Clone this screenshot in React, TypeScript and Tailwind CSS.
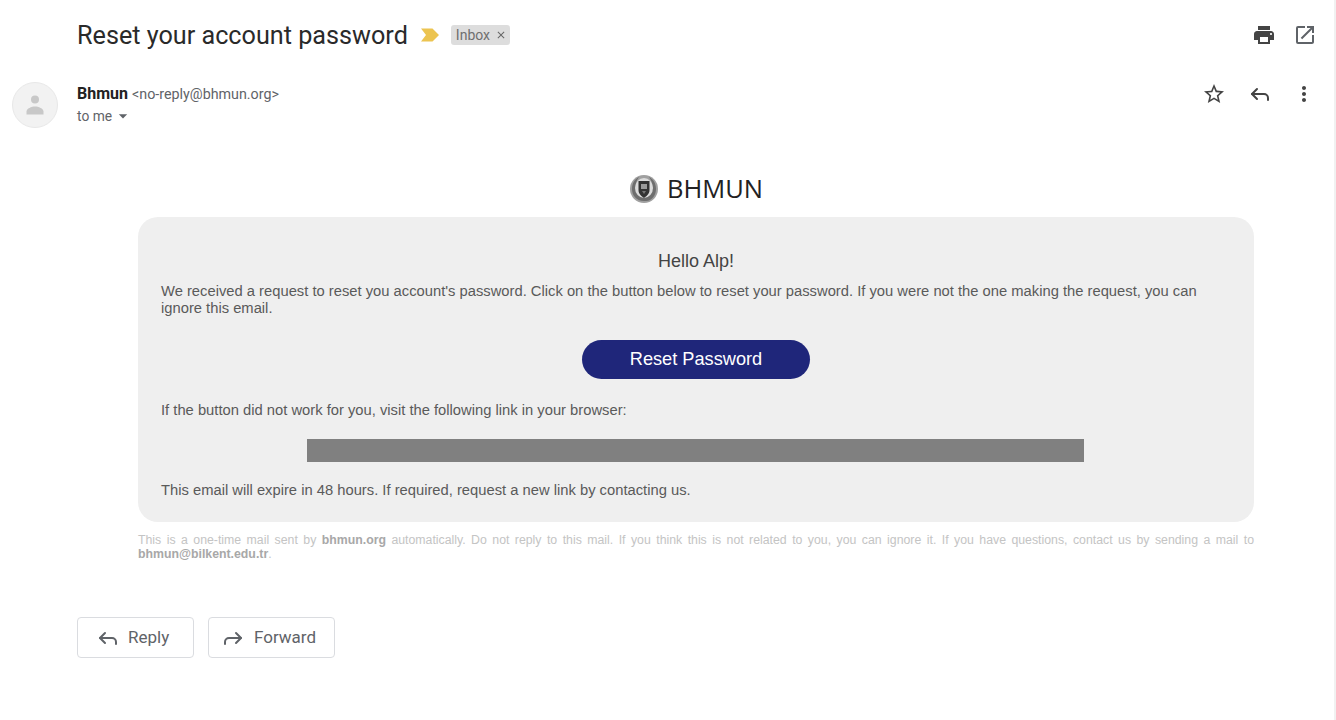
import React from "react";
import { MdPrint, MdOpenInNew, MdStarBorder, MdMoreVert, MdArrowDropDown, MdClose } from "react-icons/md";
import { Reply, Forward } from "lucide-react";

const arial = "font-['Liberation_Sans',Arial,sans-serif]";

const Logo = () => (
  <svg width="30" height="30" viewBox="0 0 30 30" className="shrink-0">
    <circle cx="15" cy="15" r="14" fill="#a0a0a0" />
    <path d="M15 27C7 27 3 21 3 15S6 5 10 3c-3 4-4 8-3 12s4 8 8 8 7-4 8-8-0-8-3-12c4 2 7 6 7 12s-4 12-10 12z" fill="#6e6e6e" />
    <ellipse cx="15" cy="14" rx="9" ry="10" fill="#dcdcdc" />
    <path d="M9.500 7h11v9c0 4-3 6-5.500 8-2.500-2-5.500-4-5.500-8z" fill="#333" />
    <path d="M12 10h6v5h-6z" fill="#9a9a9a" />
    <path d="M13 17h4l-2 3z" fill="#777" />
  </svg>
);

const App = () => {
  return (
    <div className="w-[1336px] h-[720px] bg-white overflow-hidden border-r-2 border-[#f1f1f1] font-['Roboto',sans-serif] text-[#222]">
      {/* subject */}
      <div className="flex items-center h-[70px] pl-[77px] pr-[17px]">
        <h1 className="pt-[2px] text-[25.200px] font-normal text-[#2a2a2a] leading-[68px]">Reset your account password</h1>
        <svg width="20" height="14" viewBox="0 0 20 14" className="ml-[12px]">
          <path d="M1 0.500h11.500l6.500 6.500-6.500 6.500H1l5-6.500z" fill="#ecc451" />
        </svg>
        <span className="ml-[11px] h-[20px] w-[59px] flex items-center gap-[5px] pl-[5px] rounded-[3px] bg-[#dddddd] text-[#6f6f6f] text-[14px] leading-none">
          Inbox
          <MdClose size={12} className="text-[#666]" />
        </span>
        <div className="ml-auto flex items-center gap-[17px]">
          <MdPrint size={24} className="text-[#444]" />
          <MdOpenInNew size={24} className="text-[#5f6368]" />
        </div>
      </div>

      {/* sender */}
      <div className="flex pl-[12px] pr-[18px] h-[60px] mt-[12px]">
        <div className="w-[46px] h-[46px] rounded-full bg-[#f2f2f2] border border-[#e8e8e8] flex items-center justify-center">
          <svg width="18" height="20" viewBox="0 0 18 20" className="text-[#c8c8c8]">
            <circle cx="9" cy="4.500" r="4" fill="currentColor" />
            <path d="M0.500 19.500v-3c0-3 5-5 8.500-5s8.500 2 8.500 5v3z" fill="currentColor" />
          </svg>
        </div>
        <div className="ml-[19px]">
          <div className="flex items-baseline h-[20px]">
            <span className="text-[16px] font-bold text-[#222]">Bhmun</span>
            <span className="ml-[4px] text-[14.300px] text-[#5f6368]">&lt;no-reply@bhmun.org&gt;</span>
          </div>
          <div className="flex items-center h-[20px] mt-[4px] text-[13.800px] text-[#5f6368]">
            to me
            <MdArrowDropDown size={20} className="ml-[1px]" />
          </div>
        </div>
        <div className="ml-auto flex items-start gap-[22px]">
          <MdStarBorder size={24} className="text-[#444]" />
          <Reply size={24} className="text-[#444]" />
          <MdMoreVert size={24} className="text-[#444] -ml-[2px]" />
        </div>
      </div>

      {/* logo */}
      <div className="flex items-center justify-center gap-[8px] ml-[138px] w-[1116px] mt-[32px] h-[30px]">
        <Logo />
        <span className="text-[25.500px] font-['Open_Sans',sans-serif] text-[#222] leading-none">BHMUN</span>
      </div>

      {/* message card */}
      <div className={`${arial} ml-[138px] w-[1116px] h-[305px] mt-[13px] rounded-[20px] bg-[#efefef] px-[23px] pt-[34px] text-[#5a5a5a] text-[14.760px] leading-[17px]`}>
        <div className="text-center text-[18px] leading-[20px] text-[#444]">Hello Alp!</div>
        <p className="mt-[12px]">
          We received a request to reset you account's password. Click on the button below to reset your password. If you were not the one making the request, you can ignore this email.
        </p>
        <div className="flex justify-center mt-[23px]">
          <div className="w-[228px] h-[39px] rounded-full bg-[#1f267a] text-white text-[18.200px] flex items-center justify-center">
            Reset Password
          </div>
        </div>
        <p className="mt-[23px]">If the button did not work for you, visit the following link in your browser:</p>
        <div className="ml-[146px] mt-[20px] w-[777px] h-[23px] bg-[#808080]" />
        <p className="mt-[20px]">This email will expire in 48 hours. If required, request a new link by contacting us.</p>
      </div>

      {/* footer note */}
      <p className={`${arial} ml-[138px] w-[1116px] mt-[11px] text-[12.300px] leading-[14px] text-[#c4c4c4] text-justify`}>
        This is a one-time mail sent by <b className="text-[#a8a8a8]">bhmun.org</b> automatically. Do not reply to this mail. If you think this is not related to you, you can ignore it. If you have questions, contact us by sending a mail to <b className="text-[#a8a8a8]">bhmun@bilkent.edu.tr</b>.
      </p>

      {/* actions */}
      <div className="flex gap-[14px] ml-[77px] mt-[56px]">
        <div className="w-[117px] h-[41px] rounded-[4px] border border-[#dadce0] flex items-center pl-[18px] gap-[8px] text-[17px] text-[#5f6368]">
          <Reply size={24} />
          Reply
        </div>
        <div className="w-[127px] h-[41px] rounded-[4px] border border-[#dadce0] flex items-center pl-[12px] gap-[9px] text-[17px] text-[#5f6368]">
          <Forward size={24} />
          Forward
        </div>
      </div>
    </div>
  );
};

export default App;
